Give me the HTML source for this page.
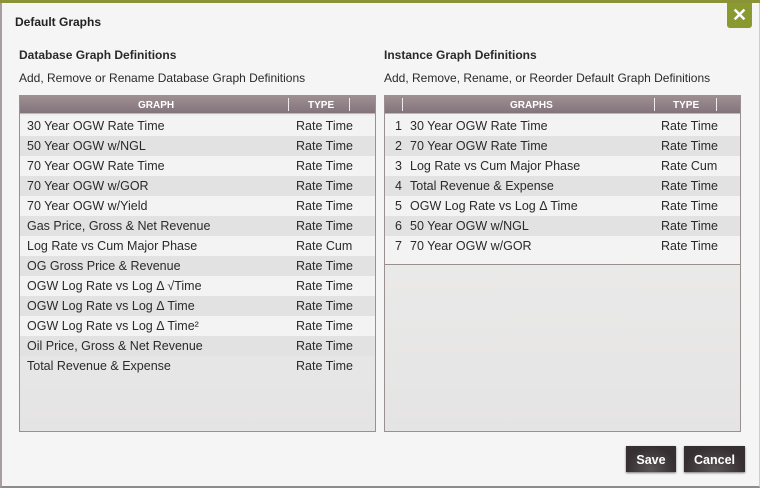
<!DOCTYPE html>
<html><head><style>
*{box-sizing:border-box;margin:0;padding:0}
body{width:760px;height:488px;background:#fff;font-family:"Liberation Sans",sans-serif;color:#2a2a2a;position:relative;overflow:hidden}
.dlg{position:absolute;left:0;top:0;width:760px;height:488px;background:#f5f5f5;border-left:2px solid #a89ca0;border-bottom:2px solid #8f8a8c;border-right:1px solid #ccc}
.topbar{position:absolute;left:0;top:0;width:760px;height:3px;background:#8a9436}
.title{position:absolute;left:15px;top:15px;font-size:12px;font-weight:bold;color:#222}
.close{position:absolute;left:727px;top:3px;width:25px;height:25px;background:#8a9a30;border-radius:0 0 3px 3px;color:#fff;font-weight:bold;font-size:18px;text-align:center;line-height:25px}
.h{position:absolute;font-size:12px;font-weight:bold;top:48px}
.s{position:absolute;font-size:12px;top:71px}
.panel{position:absolute;top:95px;height:337px;border:1px solid #9a9090;background:linear-gradient(#efefee,#e5e4e4)}
.hd{height:18px;background:linear-gradient(#9e8f93,#82747a);color:#fff;font-size:10px;font-weight:bold;position:relative;border-bottom:1px solid #bdb5b7}
.hd span{position:absolute;top:4px}
.sep{position:absolute;top:2px;width:1px;height:13px;background:#f0eaea}
.row{height:20px;font-size:12.5px;line-height:20px;position:relative;background:#f3f3f3}
.row:nth-child(even){background:#e2e2e2}
.row span{position:absolute}
.btn{position:absolute;top:446px;height:26px;background:radial-gradient(ellipse at 50% 90%,#5a5456,#352f31 70%);color:#fff;font-weight:bold;font-size:12.5px;text-align:center;line-height:28px;box-shadow:0 1px 2px #777}
</style></head><body>
<div class="dlg"></div>
<div class="topbar"></div>
<div class="title">Default Graphs</div>
<div class="close">✕</div>
<div class="h" style="left:19px">Database Graph Definitions</div>
<div class="s" style="left:19px">Add, Remove or Rename Database Graph Definitions</div>
<div class="h" style="left:384px">Instance Graph Definitions</div>
<div class="s" style="left:384px">Add, Remove, Rename, or Reorder Default Graph Definitions</div>

<div class="panel" style="left:19px;width:357px">
<div class="hd"><span style="left:118px">GRAPH</span><div class="sep" style="left:268px"></div><span style="left:288px">TYPE</span><div class="sep" style="left:329px"></div></div>
<div style="margin-top:2px">
<div class="row"><span style="left:7px">30 Year OGW Rate Time</span><span style="left:276px">Rate Time</span></div>
<div class="row"><span style="left:7px">50 Year OGW w/NGL</span><span style="left:276px">Rate Time</span></div>
<div class="row"><span style="left:7px">70 Year OGW Rate Time</span><span style="left:276px">Rate Time</span></div>
<div class="row"><span style="left:7px">70 Year OGW w/GOR</span><span style="left:276px">Rate Time</span></div>
<div class="row"><span style="left:7px">70 Year OGW w/Yield</span><span style="left:276px">Rate Time</span></div>
<div class="row"><span style="left:7px">Gas Price, Gross &amp; Net Revenue</span><span style="left:276px">Rate Time</span></div>
<div class="row"><span style="left:7px">Log Rate vs Cum Major Phase</span><span style="left:276px">Rate Cum</span></div>
<div class="row"><span style="left:7px">OG Gross Price &amp; Revenue</span><span style="left:276px">Rate Time</span></div>
<div class="row"><span style="left:7px">OGW Log Rate vs Log Δ √Time</span><span style="left:276px">Rate Time</span></div>
<div class="row"><span style="left:7px">OGW Log Rate vs Log Δ Time</span><span style="left:276px">Rate Time</span></div>
<div class="row"><span style="left:7px">OGW Log Rate vs Log Δ Time²</span><span style="left:276px">Rate Time</span></div>
<div class="row"><span style="left:7px">Oil Price, Gross &amp; Net Revenue</span><span style="left:276px">Rate Time</span></div>
<div class="row" style="background:transparent"><span style="left:7px">Total Revenue &amp; Expense</span><span style="left:276px">Rate Time</span></div>
</div></div>

<div class="panel" style="left:384px;width:357px">
<div class="hd"><div class="sep" style="left:17px"></div><span style="left:125px">GRAPHS</span><div class="sep" style="left:269px"></div><span style="left:288px">TYPE</span><div class="sep" style="left:331px"></div></div>
<div style="border-bottom:1px solid #9a9090;height:151px;background:#f3f3f3;padding-top:2px">
<div class="row"><span style="left:10px">1</span><span style="left:25px">30 Year OGW Rate Time</span><span style="left:276px">Rate Time</span></div>
<div class="row"><span style="left:10px">2</span><span style="left:25px">70 Year OGW Rate Time</span><span style="left:276px">Rate Time</span></div>
<div class="row"><span style="left:10px">3</span><span style="left:25px">Log Rate vs Cum Major Phase</span><span style="left:276px">Rate Cum</span></div>
<div class="row"><span style="left:10px">4</span><span style="left:25px">Total Revenue &amp; Expense</span><span style="left:276px">Rate Time</span></div>
<div class="row"><span style="left:10px">5</span><span style="left:25px">OGW Log Rate vs Log Δ Time</span><span style="left:276px">Rate Time</span></div>
<div class="row"><span style="left:10px">6</span><span style="left:25px">50 Year OGW w/NGL</span><span style="left:276px">Rate Time</span></div>
<div class="row"><span style="left:10px">7</span><span style="left:25px">70 Year OGW w/GOR</span><span style="left:276px">Rate Time</span></div>
</div></div>

<div class="btn" style="left:626px;width:50px">Save</div>
<div class="btn" style="left:684px;width:61px">Cancel</div>
</body></html>
